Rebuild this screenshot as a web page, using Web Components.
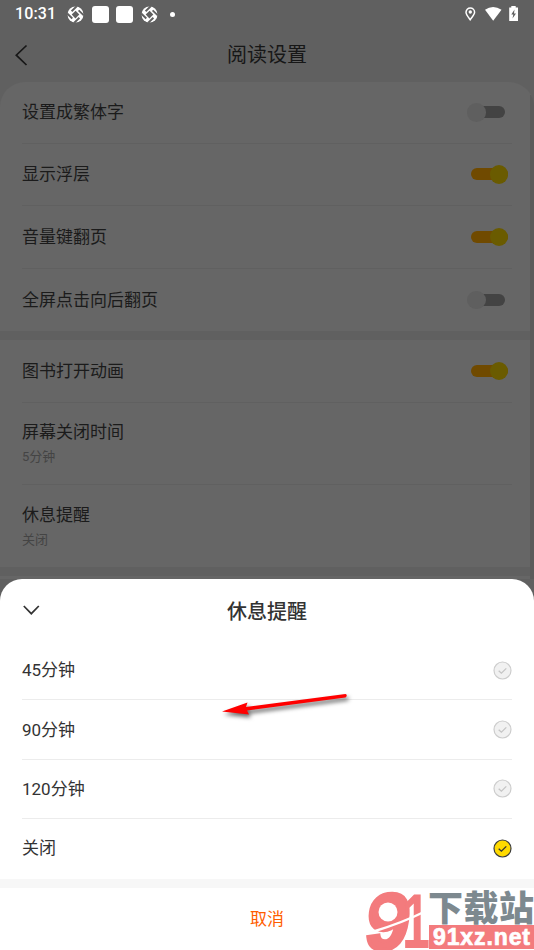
<!DOCTYPE html>
<html lang="zh-CN"><head><meta charset="utf-8"><title>阅读设置</title>
<style>
html,body{margin:0;height:950px;overflow:hidden}
body{font-family:Roboto,"Noto Sans CJK SC",sans-serif;background:#606060}
</style></head><body><reading-app></reading-app>
<script>
const define=(name,html,init)=>customElements.define(name,class extends HTMLElement{
  constructor(){super();this.attachShadow({mode:'open'});}
  connectedCallback(){const t=document.createElement('template');t.innerHTML=typeof html==='function'?html(this):html;this.shadowRoot.replaceChildren(t.content.cloneNode(true));}
});
const aperture=`<svg width="17" height="17" viewBox="0 0 17 17"><circle cx="8.5" cy="8.5" r="8" fill="#fff"/><path d="M8.6 4.7 12.3 8.4 8.4 12.4 4.7 8.6Z" fill="#606060"/><path d="M9.7 .2 4.6 5.2M16.8 9.4 11.6 4.4M7.3 16.8 12.4 11.8M.2 7.5 5.3 12.5" stroke="#606060" stroke-width="1.9"/></svg>`;
define('status-bar',`<style>
:host{display:flex;height:28px;align-items:center;color:#fff;box-sizing:border-box;padding:0 15px 0 15px;font:500 16px/28px Roboto,sans-serif}
.time{width:52px;letter-spacing:.1px}.sq{width:17px;height:17px;border-radius:3px;background:#fff}
.l{display:flex;gap:7.5px;align-items:center}.dot{width:5px;height:5px;border-radius:50%;background:#fff;margin-left:5px}
.r{display:flex;align-items:center;margin-left:auto}svg{display:block}
</style><span class="time">10:31</span><div class="l">${aperture}<i class="sq"></i><i class="sq"></i>${aperture}<i class="dot"></i></div>
<div class="r"><svg width="54" height="18" viewBox="465 4 54 18"><path d="M470.2 17.2C467.8 14 466 11.8 466 9.7a4.3 4.3 0 0 1 8.6 0C474.6 11.8 472.700 14 470.200 17.200Z" transform="translate(0,1.5)" fill="none" stroke="#fff" stroke-width="1.500"/><circle cx="470.300" cy="11" r="1.700" fill="#fff"/><path d="M485 8.800Q493 3.400 501.500 8.800L493.200 19.700Z" fill="#fff"/><path d="M509.200 6.500H511.300V5H515.700V6.500H518V20H509.200Z" fill="#fff"/><path d="M514.500 8.500 511.300 13.500H513.300L512.500 17.500 516 12.500H514Z" fill="#606060"/></svg></div>`);
define('nav-bar',`<style>:host{display:grid;grid-template-columns:60px 1fr 60px;height:54px;align-items:center;color:#171717;font-size:20px;line-height:54px;text-align:center}svg{display:block;margin-left:14px}</style>
<svg width="14" height="22" viewBox="0 0 14 22"><path d="M12.500 1.500 2.300 11.200 12.500 21" fill="none" stroke="#171717" stroke-width="1.700"/></svg><span><slot></slot></span>`);
define('toggle-switch',e=>`<style>:host{display:grid;width:41px;height:19px;align-items:center}i{grid-area:1/1}.t{width:37px;height:12px;border-radius:6px;background:${e.hasAttribute('on')?'#704a00':'#434343'};margin-left:3px}
.k{width:18.500px;height:18.500px;border-radius:50%;background:${e.hasAttribute('on')?'#6a5b00':'#5f5f5f'};justify-self:${e.hasAttribute('on')?'end':'start'}}
.t{margin-left:${e.hasAttribute('on')?3.500:1}px}</style><i class="t"></i><i class="k"></i>`);
define('setting-row',e=>`<style>:host{display:flex;box-sizing:border-box;margin:0 22px;align-items:center;justify-content:space-between;color:#1b1b1b;font-size:17px;line-height:24px;border-bottom:${e.hasAttribute('last')?0:1}px solid #606060}
::slotted(toggle-switch){margin-right:4px}
::slotted(small){display:block;font-size:13px;line-height:19px;color:#444;margin-top:3px}</style><div><slot></slot></div><slot name="control"></slot>`);
define('check-mark',e=>{const c=e.hasAttribute('on');return `<style>:host,svg{display:block}</style><svg width="19" height="19" viewBox="0 0 19 19"><circle cx="9.500" cy="9.500" r="8.500" fill="${c?'#ffda00':'#f1f1f1'}" stroke="${c?'#3c3c3c':'#cdcdcd'}" stroke-width="1.200"/><path d="M5.700 9.700 8.400 12.200 13.300 7.400" fill="none" stroke="${c?'#333':'#c5c5c5'}" stroke-width="1.300"/></svg>`});
define('option-row',e=>`<style>:host{display:flex;box-sizing:border-box;height:59.400px;margin:0 22px;align-items:center;justify-content:space-between;color:#333;font-size:17px;line-height:24px;border-bottom:1px solid ${e.hasAttribute('last')?'transparent':'#ececec'}}</style><span><slot></slot></span><check-mark ${e.hasAttribute('on')?'on':''}></check-mark>`);
define('bottom-sheet',`<style>:host{display:block;background:#fff;border-radius:22px 22px 0 0;height:371px;overflow:hidden;color:#333}
header{display:grid;grid-template-columns:60px 1fr 60px;height:62px;align-items:center;text-align:center;font-size:20px;font-weight:500}svg{display:block;margin-left:22px}.gap{height:9px;background:#f7f7f7}
footer{height:62px;line-height:62px;text-align:center;color:#ff5d00;font-size:17px}</style>
<header><svg width="18" height="12" viewBox="0 0 18 12"><path d="M1.800 2 9.300 9.700 16.800 2" fill="none" stroke="#333" stroke-width="1.700"/></svg><span><slot name="title"></slot></span></header><slot></slot><div class="gap"></div><footer><slot name="cancel"></slot></footer>`);
define('pointer-arrow',`<style>:host,svg{display:block}svg{filter:drop-shadow(2px 3px 2px #0009)}</style><svg width="145" height="42" viewBox="215 684 145 42"><path d="M222 711.500 247.500 702.500 246 707 345.500 694Q348 695 345.500 697.500L247 710.500 249 714.500Z" fill="#f00"/></svg>`);
define('site-mark',`<style>:host,svg{display:block}</style><svg width="170" height="62" viewBox="364 888 170 62">
<g fill="#f37b7d"><text transform="translate(363 949) skewX(-8)" font-family="Liberation Sans" font-weight="700" font-size="79" textLength="43" lengthAdjust="spacingAndGlyphs" stroke="#f37b7d" stroke-width="4">9</text>
<text x="402" y="948" font-family="Liberation Sans" font-weight="700" font-size="77" textLength="28" lengthAdjust="spacingAndGlyphs">1</text></g>
<circle cx="388" cy="912" r="9.500" fill="#fff"/><path d="M372 932Q402 923 426 911" stroke="#fff" stroke-width="2.500" fill="none"/>
<text x="428" y="921" font-family="Noto Sans CJK SC" font-weight="900" font-size="35" textLength="106" fill="#7d898f">下载站</text>
<rect x="429" y="925" width="105" height="24" fill="#f37b7d"/><text x="433" y="945" font-family="Liberation Sans" font-weight="700" font-size="23" textLength="97" fill="#fff" stroke="#fff" stroke-width=".7">91xz.net</text></svg>`);
define('reading-app',`<style>:host{display:block;position:relative;width:534px;height:950px;background:#606060;overflow:hidden}
.card{background:#666;border-radius:25px 25px 0 0;height:497px;overflow:hidden;box-sizing:border-box;border-right:4px solid #5b5b5b;border-right:0;background:linear-gradient(#5b5b5b,#5b5b5b) right 13px/4px 100% no-repeat #666}
.band{height:9px;background:#606060;width:530px}.a{height:61.500px}.b{height:62.500px}.c{height:82px}
bottom-sheet{position:absolute;left:0;right:0;top:579px}pointer-arrow{position:absolute;left:215px;top:684px}site-mark{position:absolute;left:364px;top:888px}</style>
<status-bar></status-bar><nav-bar>阅读设置</nav-bar>
<div class="card"><setting-row class="a">设置成繁体字<toggle-switch slot="control"></toggle-switch></setting-row>
<setting-row class="b">显示浮层<toggle-switch on slot="control"></toggle-switch></setting-row>
<setting-row class="b">音量键翻页<toggle-switch on slot="control"></toggle-switch></setting-row>
<setting-row class="b" last>全屏点击向后翻页<toggle-switch slot="control"></toggle-switch></setting-row><div class="band"></div>
<setting-row class="b">图书打开动画<toggle-switch on slot="control"></toggle-switch></setting-row>
<setting-row class="c">屏幕关闭时间<small>5分钟</small></setting-row><setting-row class="c" last>休息提醒<small>关闭</small></setting-row><div class="band"></div></div>
<bottom-sheet><span slot="title">休息提醒</span><option-row>45分钟</option-row><option-row>90分钟</option-row><option-row>120分钟</option-row><option-row last on>关闭</option-row><span slot="cancel">取消</span></bottom-sheet>
<pointer-arrow></pointer-arrow><site-mark></site-mark>`);
</script></body></html>
